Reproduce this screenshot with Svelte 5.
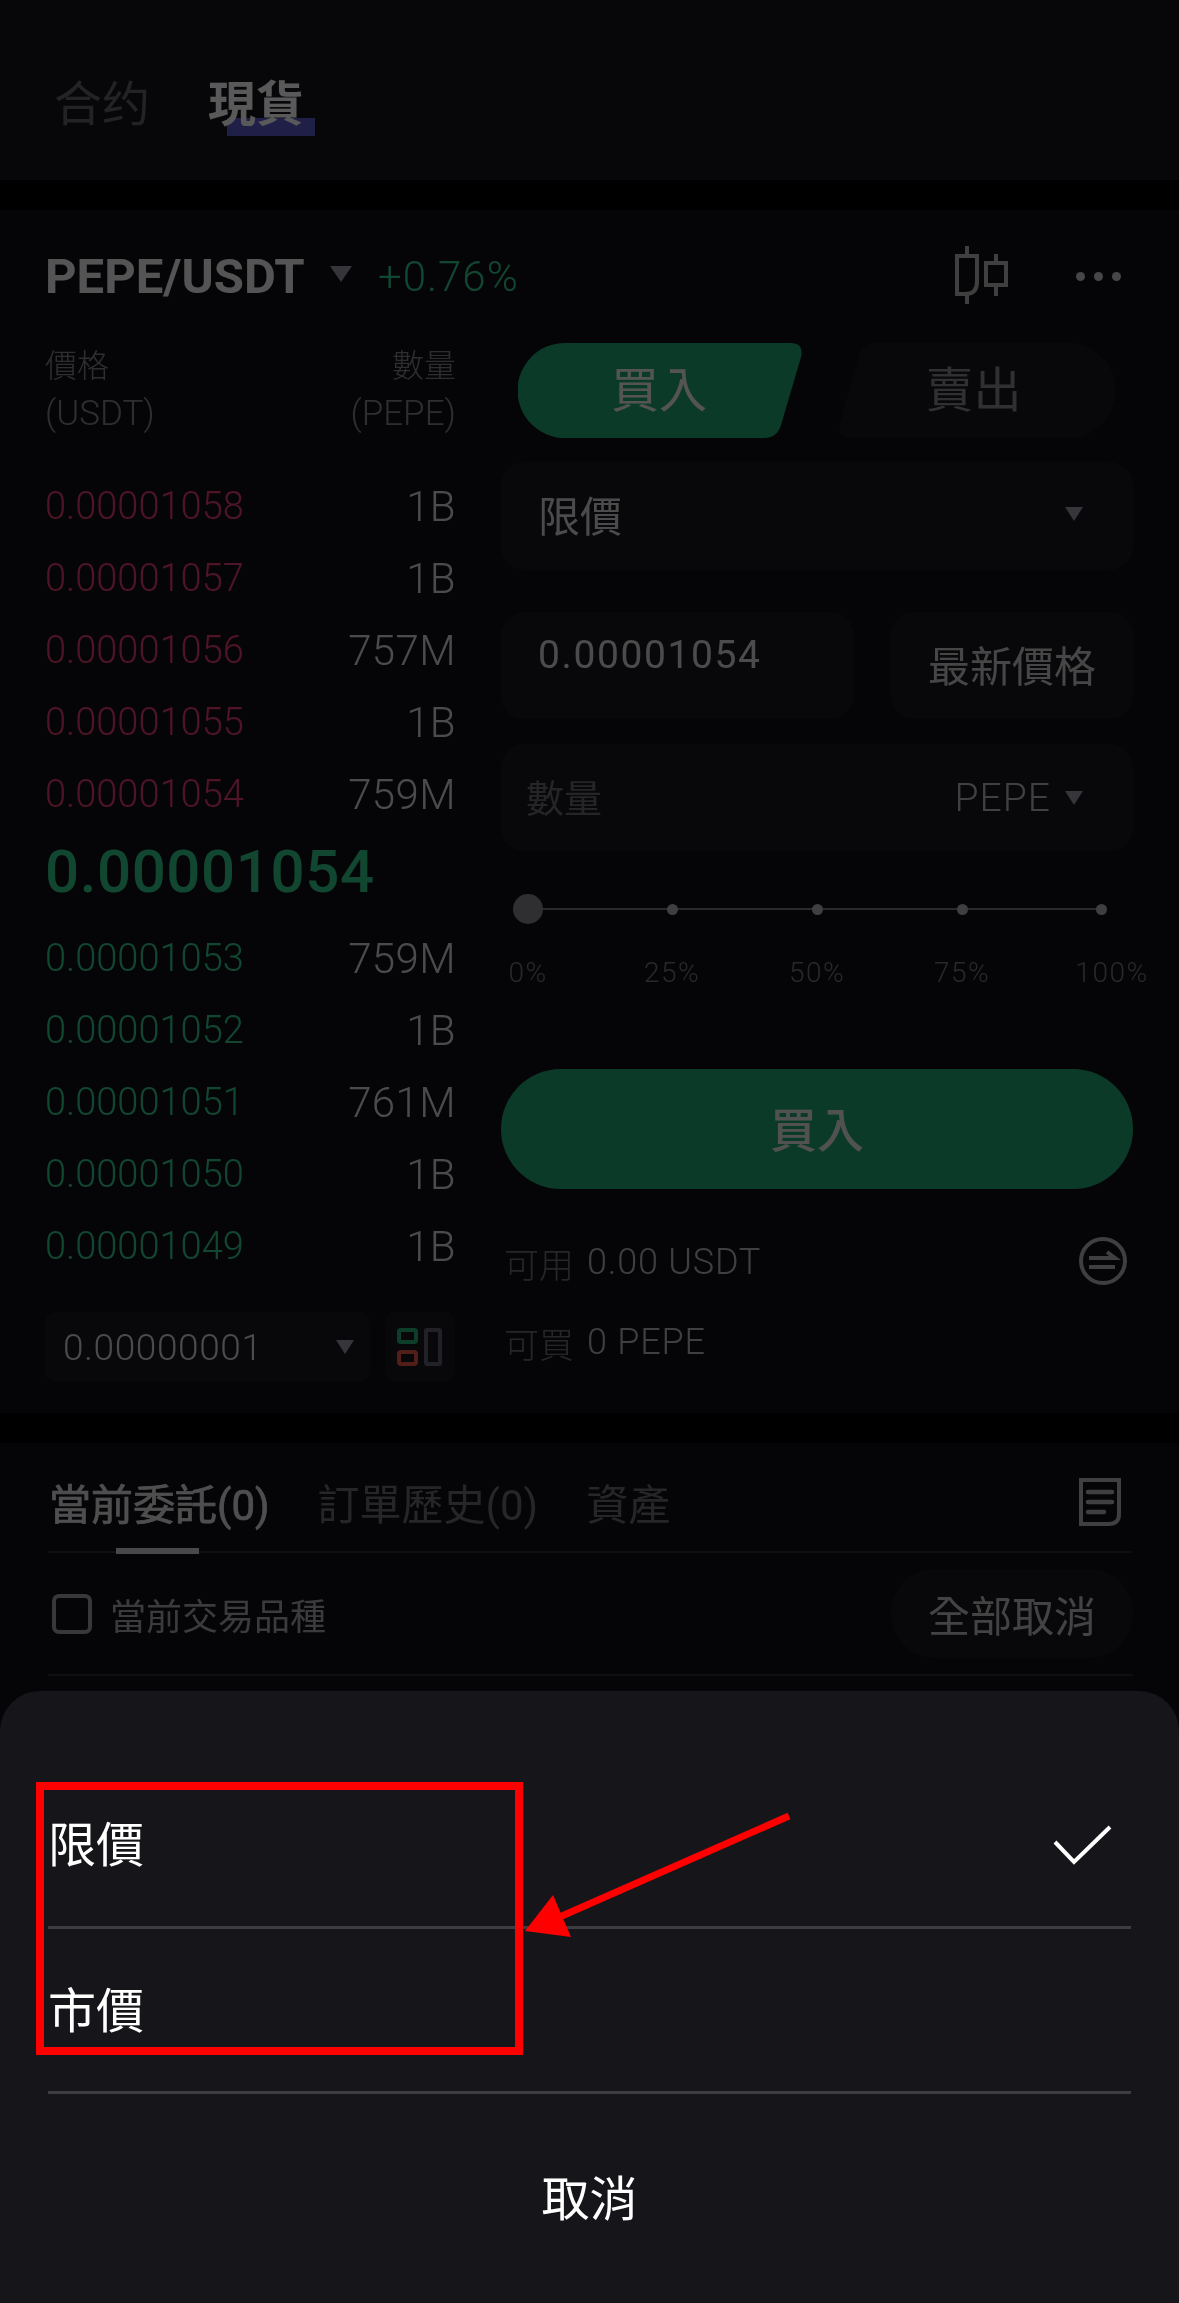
<script lang="ts">
  const asks = [
    { price: "0.00001058", size: "1B" },
    { price: "0.00001057", size: "1B" },
    { price: "0.00001056", size: "757M" },
    { price: "0.00001055", size: "1B" },
    { price: "0.00001054", size: "759M" }
  ];
  const bids = [
    { price: "0.00001053", size: "759M" },
    { price: "0.00001052", size: "1B" },
    { price: "0.00001051", size: "761M" },
    { price: "0.00001050", size: "1B" },
    { price: "0.00001049", size: "1B" }
  ];
  const steps = ["0%", "25%", "50%", "75%", "100%"];
</script>

<div class="page">
  <header class="top">
    <span class="top-tab">合约</span>
    <span class="top-tab active">現貨<i class="mark"></i></span>
  </header>

  <section class="trade">
    <div class="pair">
      <strong class="symbol">PEPE/USDT</strong>
      <span class="caret pair-caret"></span>
      <span class="change">+0.76%</span>
      <svg class="candles" width="54" height="58" viewBox="0 0 54 58" fill="none" stroke="#b4b4b4" stroke-width="4" aria-hidden="true">
        <path d="M2 10H22V36Q22 48 10 48H2Z" />
        <path d="M12 0V10M12 48V58" />
        <rect x="31" y="17" width="20" height="22" />
        <path d="M41 8V17M41 39V50" />
      </svg>
      <span class="more"><i></i><i></i><i></i></span>
    </div>

    <div class="columns">
      <div class="book">
        <div class="book-head">
          <span>價格<br /><span class="ccy">(USDT)</span></span>
          <span class="right">數量<br /><span class="ccy">(PEPE)</span></span>
        </div>
        <div class="rows">
          {#each asks as row}
            <div class="row"><span class="ask">{row.price}</span><span class="size">{row.size}</span></div>
          {/each}
          <div class="last">0.00001054</div>
          {#each bids as row}
            <div class="row"><span class="bid">{row.price}</span><span class="size">{row.size}</span></div>
          {/each}
        </div>
        <div class="book-foot">
          <div class="tick">0.00000001<span class="caret"></span></div>
          <div class="layout-btn">
            <svg width="46" height="38" viewBox="0 0 46 38" fill="none" stroke-width="4" aria-hidden="true">
              <rect x="2" y="2" width="17" height="12" rx="2" stroke="#27b277" />
              <rect x="2" y="24" width="17" height="12" rx="2" stroke="#e8564a" />
              <rect x="29" y="2" width="14" height="34" rx="1" stroke="#5f5f70" />
            </svg>
          </div>
        </div>
      </div>

      <div class="form">
        <div class="sides">
          <div class="side buy">
            <svg width="286" height="95" viewBox="0 0 286 95" aria-hidden="true"><path d="M47 0H272Q286 0 283 14L263 82Q259 95 246 95H47A47 47 0 0 1 47 0Z" fill="#22a872" /></svg>
            <span>買入</span>
          </div>
          <div class="side sell">
            <svg width="279" height="95" viewBox="0 0 279 95" aria-hidden="true"><path d="M40 0H231A47.5 47.5 0 0 1 231 95H14Q0 95 3 80L22 14Q26 0 40 0Z" fill="#18181f" /></svg>
            <span>賣出</span>
          </div>
        </div>

        <div class="field order-type"><span>限價</span><span class="caret"></span></div>

        <div class="price-row">
          <div class="field price">0.00001054</div>
          <div class="field latest">最新價格</div>
        </div>

        <div class="field qty">
          <span class="hint">數量</span>
          <span class="unit">PEPE<span class="caret"></span></span>
        </div>

        <div class="slider">
          <i class="track"></i>
          <div class="dots">
            {#each steps as step, i}
              <span class="cell"><i class:handle={i === 0} class="dot"></i></span>
            {/each}
          </div>
        </div>
        <div class="labels">
          {#each steps as step}
            <span class="cell"><span class="label">{step}</span></span>
          {/each}
        </div>

        <div class="submit">買入</div>

        <div class="info first">
          <span class="key">可用</span><span class="val">0.00 USDT</span>
          <svg class="swap" width="48" height="48" viewBox="0 0 48 48" fill="none" stroke="#b4b4b4" stroke-width="4" aria-hidden="true">
            <circle cx="24" cy="24" r="22" />
            <path d="M10 21H36L28 15M10 30H36" />
          </svg>
        </div>
        <div class="info"><span class="key">可買</span><span class="val">0 PEPE</span></div>
      </div>
    </div>
  </section>

  <section class="orders">
    <div class="order-tabs">
      <span class="order-tab current">當前委託(0)</span>
      <span class="order-tab">訂單歷史(0)</span>
      <span class="order-tab">資產</span>
      <svg class="doc" width="42" height="48" viewBox="0 0 42 48" fill="none" stroke="#b4b4b4" aria-hidden="true">
        <path d="M2 2H40V36Q40 46 30 46H2Z" stroke-width="4" />
        <path d="M9 14H33M9 24H33M9 34H25" stroke-width="4.5" stroke-linecap="round" />
      </svg>
    </div>
    <div class="order-filter">
      <span class="check"></span>
      <span class="filter-text">當前交易品種</span>
      <span class="cancel-all">全部取消</span>
    </div>
  </section>

  <div class="dim"></div>

  <div class="sheet">
    <div class="option">
      <span>限價</span>
      <svg width="60" height="40" viewBox="0 0 60 40" fill="none" stroke="#fff" stroke-width="4" aria-hidden="true"><path d="M2 17L21 37L57 2" /></svg>
    </div>
    <div class="option"><span>市價</span></div>
    <div class="dismiss">取消</div>
  </div>

  <svg class="callout" width="1179" height="2303" viewBox="0 0 1179 2303" fill="none" aria-hidden="true">
    <rect x="40" y="1786" width="479" height="265" stroke="#fe0000" stroke-width="8" />
    <path d="M789 1816L555 1919" stroke="#fe0000" stroke-width="7" />
    <polygon points="525,1931 553,1895 571,1937" fill="#fe0000" />
  </svg>
</div>

<style>
  :global(body) {
    margin: 0;
    background: #000;
  }

  .page {
    position: relative;
    width: 1179px;
    height: 2303px;
    overflow: hidden;
    display: flex;
    flex-direction: column;
    gap: 30px;
    background: #000;
    color: #fff;
    font-family: Roboto, "Noto Sans CJK TC", sans-serif;
  }

  .top {
    height: 180px;
    flex: none;
    box-sizing: border-box;
    padding: 30px 0 0 54px;
    display: flex;
    align-items: center;
    gap: 58px;
    background: #16161f;
  }

  .top-tab {
    position: relative;
    font-size: 48px;
    line-height: 60px;
    color: #65656c;
  }

  .top-tab.active {
    color: #fff;
    font-weight: 700;
  }

  .mark {
    position: absolute;
    left: 19px;
    top: 43px;
    width: 88px;
    height: 18px;
    background: #4a49c8;
    mix-blend-mode: screen;
  }

  .trade {
    height: 1203px;
    flex: none;
    box-sizing: border-box;
    padding: 0 44px 0 45px;
    background: #111118;
  }

  .pair {
    height: 132px;
    display: flex;
    align-items: center;
  }

  .symbol {
    font-size: 49px;
    font-weight: 700;
    width: 285px;
    color: #f0f0f0;
    white-space: nowrap;
  }

  .caret {
    display: inline-block;
    flex: none;
    width: 0;
    height: 0;
    border-left: 9px solid transparent;
    border-right: 9px solid transparent;
    border-top: 14px solid #9a9aa5;
  }

  .pair-caret {
    margin-top: -4px;
    border-left-width: 11px;
    border-right-width: 11px;
    border-top-width: 16px;
  }

  .change {
    margin-left: 26px;
    font-size: 42px;
    font-weight: 300;
    color: #33c98c;
    letter-spacing: 1px;
  }

  .candles {
    margin-left: auto;
    margin-top: -2px;
  }

  .more {
    display: flex;
    gap: 9px;
    margin: 0 14px 0 67px;
  }

  .more i {
    width: 9px;
    height: 9px;
    border-radius: 50%;
    background: #c8c8c8;
  }

  .columns {
    display: grid;
    grid-template-columns: 411px 632px;
    column-gap: 45px;
  }

  .book-head {
    display: flex;
    justify-content: space-between;
    font-size: 32px;
    line-height: 48px;
    font-weight: 300;
    color: #85858c;
  }

  .ccy {
    font-size: 35px;
  }

  .right {
    text-align: right;
  }

  .rows {
    margin-top: 32px;
  }

  .row {
    height: 72px;
    display: flex;
    align-items: center;
    justify-content: space-between;
    font-size: 38px;
    font-weight: 300;
  }

  .ask {
    color: #e23a6c;
  }

  .bid {
    color: #33c98c;
  }

  .size {
    color: #d8d8d8;
    font-size: 42px;
    letter-spacing: 0.4px;
  }

  .last {
    height: 82px;
    padding-bottom: 10px;
    display: flex;
    align-items: center;
    font-size: 60px;
    font-weight: 500;
    color: #33c98c;
    letter-spacing: 0.6px;
  }

  .book-foot {
    margin-top: 30px;
    display: flex;
    gap: 15px;
  }

  .tick {
    width: 325px;
    height: 70px;
    box-sizing: border-box;
    padding: 0 16px 0 18px;
    display: flex;
    align-items: center;
    justify-content: space-between;
    border-radius: 12px;
    background: #18181f;
    font-size: 37px;
    font-weight: 300;
    color: #d8d8d8;
    letter-spacing: 0.6px;
  }

  .layout-btn {
    width: 70px;
    height: 70px;
    display: flex;
    align-items: center;
    justify-content: center;
    border-radius: 12px;
    background: #18181f;
  }

  .sides {
    height: 96px;
    display: flex;
    justify-content: space-between;
    padding: 0 17px;
  }

  .side {
    position: relative;
    display: flex;
    align-items: center;
    justify-content: center;
    font-size: 48px;
  }

  .side svg {
    display: block;
  }

  .side span {
    position: absolute;
    inset: 0;
    padding-bottom: 8px;
    display: flex;
    align-items: center;
    justify-content: center;
  }

  .buy span {
    color: #f0f0f0;
    left: -4px;
  }

  .sell span {
    color: #8a8a90;
    left: -6px;
  }

  .field {
    box-sizing: border-box;
    height: 107px;
    display: flex;
    align-items: center;
    border-radius: 24px;
    background: #18181f;
  }

  .order-type {
    margin-top: 24px;
    height: 108px;
    padding: 0 50px 5px 37px;
    justify-content: space-between;
    font-size: 42px;
    color: #d8d8d8;
  }

  .price-row {
    margin-top: 42px;
    display: flex;
    justify-content: space-between;
  }

  .price {
    width: 353px;
    padding: 0 0 22px 37px;
    font-size: 39px;
    letter-spacing: 1.6px;
    color: #d8d8d8;
  }

  .latest {
    width: 242px;
    justify-content: center;
    padding-bottom: 4px;
    font-size: 42px;
    color: #c8c8c8;
  }

  .qty {
    margin-top: 25px;
    padding: 0 50px 5px 25px;
    justify-content: space-between;
    font-size: 38px;
  }

  .hint {
    color: #6b6b72;
  }

  .unit {
    display: flex;
    align-items: center;
    gap: 14px;
    margin-top: 5px;
    color: #b8b8b8;
    font-weight: 300;
    font-size: 39px;
    letter-spacing: 1px;
  }

  .slider {
    position: relative;
    margin-top: 42px;
    height: 32px;
  }

  .track {
    position: absolute;
    left: 27px;
    right: 32px;
    top: 15px;
    height: 2px;
    background: #7a7a80;
  }

  .dots,
  .labels {
    display: grid;
    margin-left: 27px;
    position: relative;
  }

  .dots {
    height: 32px;
    grid-template-columns: 144px 145px 145px 139px 1fr;
    align-items: center;
  }

  .labels {
    margin-top: 27px;
    height: 40px;
    grid-template-columns: 144px 145px 145px 150px 1fr;
    align-items: center;
  }

  .cell {
    width: 0;
    display: flex;
    justify-content: center;
  }

  .dot {
    flex: none;
    width: 11px;
    height: 11px;
    border-radius: 50%;
    background: #b4b4b8;
  }

  .dot.handle {
    width: 30px;
    height: 30px;
    background: #86868f;
  }

  .label {
    flex: none;
    font-size: 28px;
    font-weight: 300;
    color: #74747a;
    letter-spacing: 1.5px;
  }

  .submit {
    margin-top: 77px;
    height: 120px;
    box-sizing: border-box;
    padding-bottom: 6px;
    display: flex;
    align-items: center;
    justify-content: center;
    border-radius: 60px;
    background: #22a872;
    font-size: 47px;
    font-weight: 500;
    color: #e8e8e8;
  }

  .info {
    margin-top: 30px;
    height: 50px;
    display: flex;
    align-items: center;
    padding-left: 3px;
  }

  .info.first {
    margin-top: 48px;
  }

  .key {
    font-size: 35px;
    font-weight: 300;
    color: #6e6e74;
    width: 83px;
  }

  .val {
    font-size: 36px;
    font-weight: 300;
    color: #b4b4b8;
    letter-spacing: 0.8px;
  }

  .swap {
    margin: -2px 6px 0 auto;
  }

  .orders {
    flex: 1;
    box-sizing: border-box;
    padding: 0 48px;
    background: #111118;
  }

  .order-tabs {
    height: 110px;
    box-sizing: border-box;
    padding: 8px 0 0 1px;
    display: flex;
    align-items: center;
    gap: 48px;
    border-bottom: 2px solid #2e2e36;
  }

  .order-tab {
    position: relative;
    font-size: 42px;
    color: #6e6e74;
  }

  .order-tab.current {
    color: #e0e0e0;
    -webkit-text-stroke: 0.7px #e0e0e0;
  }

  .order-tab.current::after {
    content: "";
    position: absolute;
    left: 67px;
    bottom: -22px;
    width: 83px;
    height: 6px;
    background: #d0d0d0;
  }

  .doc {
    margin: 2px 10px 0 auto;
  }

  .order-filter {
    height: 123px;
    box-sizing: border-box;
    padding-left: 4px;
    margin-right: -2px;
    display: flex;
    align-items: center;
    border-bottom: 2px solid #2e2e36;
  }

  .check {
    box-sizing: border-box;
    width: 40px;
    height: 40px;
    border: 4px solid #a0a0a6;
    border-radius: 7px;
  }

  .filter-text {
    margin-left: 18px;
    font-size: 36px;
    color: #a8a8ae;
  }

  .cancel-all {
    margin-left: auto;
    width: 242px;
    height: 89px;
    display: flex;
    align-items: center;
    justify-content: center;
    border-radius: 45px;
    background: #18181f;
    font-size: 42px;
    color: #c0c0c0;
  }

  .dim {
    position: absolute;
    inset: 0;
    background: rgba(0, 0, 0, 0.65);
  }

  .sheet {
    position: absolute;
    left: 0;
    right: 0;
    bottom: 0;
    height: 612px;
    box-sizing: border-box;
    padding: 72px 48px 0;
    border-radius: 40px 40px 0 0;
    background: #15151a;
    font-size: 48px;
  }

  .option {
    height: 165px;
    box-sizing: border-box;
    padding: 0 18px 7px 0;
    display: flex;
    align-items: center;
    justify-content: space-between;
    border-bottom: 3px solid #3c3c41;
  }

  .option:first-child {
    height: 166px;
  }

  .option svg {
    margin-top: 8px;
  }

  .dismiss {
    height: 209px;
    box-sizing: border-box;
    padding-bottom: 7px;
    display: flex;
    align-items: center;
    justify-content: center;
  }

  .callout {
    position: absolute;
    left: 0;
    top: 0;
  }
</style>
